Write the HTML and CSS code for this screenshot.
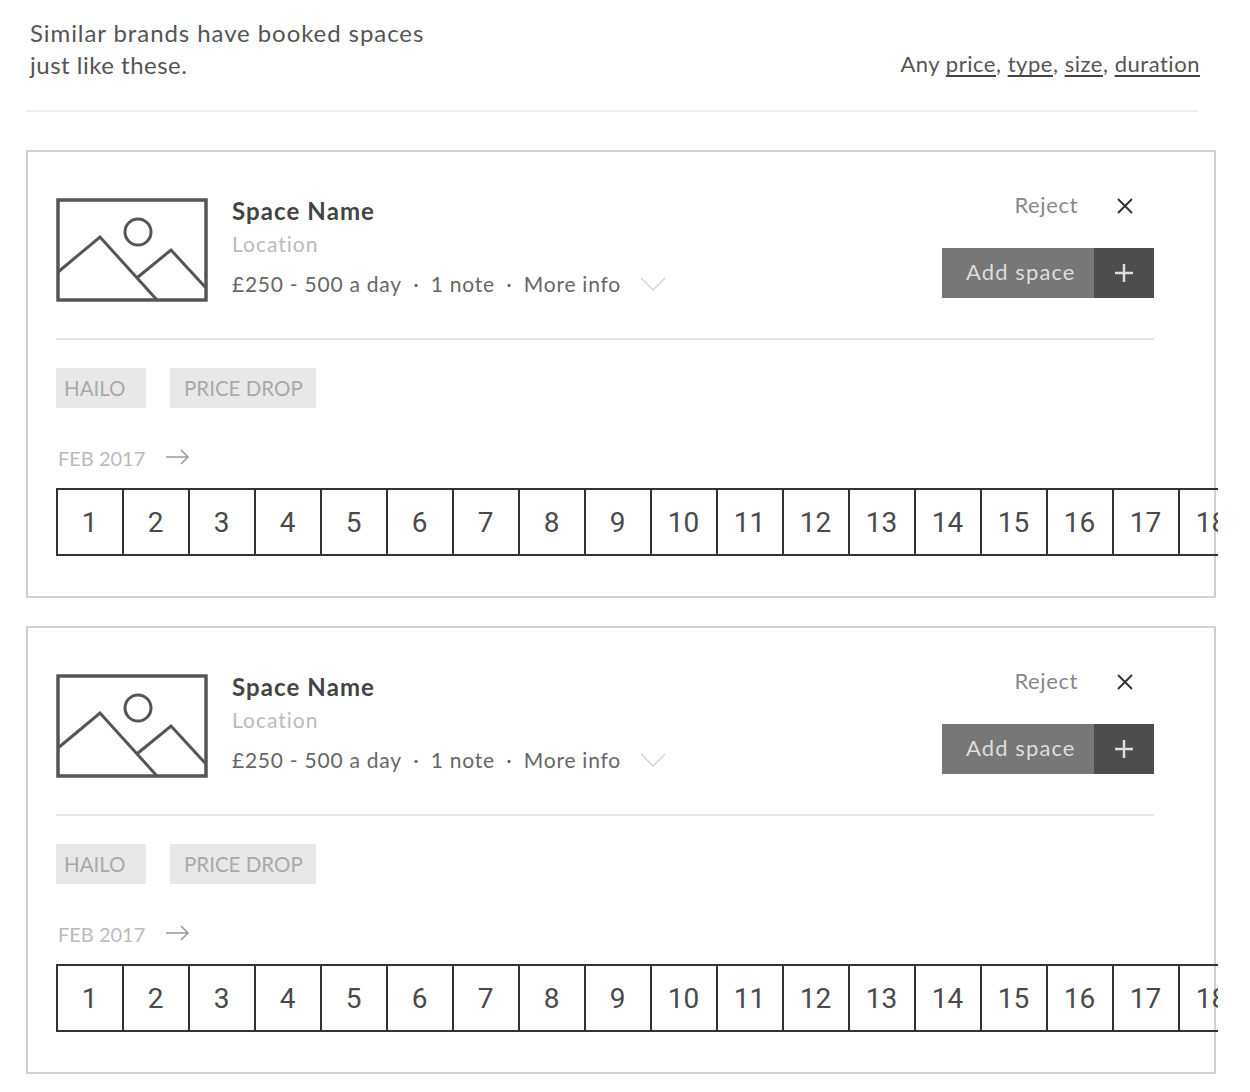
FILE: index.html
```html
<!DOCTYPE html>
<html>
<head>
<meta name="viewport" content="width=device-width, initial-scale=1">
<link rel="stylesheet" href="styles.css">
</head>
<body>

<div class="intro">
    <h2 class="introTitle">Similar brands have booked spaces<br><span class="introEnd">just like these.</span></h2>
    <p class="filters">Any <a href="#price">price</a>, <a href="#type">type</a>, <a href="#size">size</a>, <a href="#duration">duration</a></p>
</div>

<div class="card">
    <div class="cardHead">
        <svg class="thumb" viewBox="0 0 152 104">
            <rect x="2" y="2" width="148" height="100" fill="none" stroke="#555" stroke-width="3.5"/>
            <circle cx="82" cy="34" r="13" fill="none" stroke="#555" stroke-width="3"/>
            <path d="M2 74 L44 39 L101 102 M82 79 L115 52 L150 90" fill="none" stroke="#555" stroke-width="3"/>
        </svg>
        <div class="info">
            <div class="name">Space Name</div>
            <div class="location">Location</div>
            <div class="meta">
                <span>£250 - 500 a day</span><span class="dot">·</span><span>1 note</span><span class="dot">·</span><span>More info</span>
                <svg class="chevron" width="26" height="14" viewBox="0 0 26 14"><path d="M1 1 L13 13 L25 1" fill="none" stroke="#d4d4d4" stroke-width="1.5"/></svg>
            </div>
        </div>
        <div class="actions">
            <div class="reject">
                <span class="rejectLabel">Reject</span>
                <svg width="18" height="18" viewBox="0 0 18 18"><path d="M2 2 L16 16 M16 2 L2 16" fill="none" stroke="#333" stroke-width="2"/></svg>
            </div>
            <div class="addBtn">
                <span class="addLabel">Add space</span>
                <span class="addIcon"><svg width="20" height="20" viewBox="0 0 20 20"><path d="M10 1 V19 M1 10 H19" fill="none" stroke="#ddd" stroke-width="2.5"/></svg></span>
            </div>
        </div>
    </div>
    <div class="tags">
        <span class="tag">HAILO</span>
        <span class="tag tagWide">PRICE DROP</span>
    </div>
    <div class="month">
        <span class="monthLabel">FEB 2017</span>
        <svg width="24" height="16" viewBox="0 0 24 16"><path d="M1 8 H23 M16 1 L23 8 L16 15" fill="none" stroke="#999" stroke-width="1.5"/></svg>
    </div>
    <div class="days">
        <div class="day">1</div><div class="day">2</div><div class="day">3</div><div class="day">4</div><div class="day">5</div><div class="day">6</div><div class="day">7</div><div class="day">8</div><div class="day">9</div><div class="day">10</div><div class="day">11</div><div class="day">12</div><div class="day">13</div><div class="day">14</div><div class="day">15</div><div class="day">16</div><div class="day">17</div><div class="day">18</div>
    </div>
</div>

<div class="card">
    <div class="cardHead">
        <svg class="thumb" viewBox="0 0 152 104">
            <rect x="2" y="2" width="148" height="100" fill="none" stroke="#555" stroke-width="3.5"/>
            <circle cx="82" cy="34" r="13" fill="none" stroke="#555" stroke-width="3"/>
            <path d="M2 74 L44 39 L101 102 M82 79 L115 52 L150 90" fill="none" stroke="#555" stroke-width="3"/>
        </svg>
        <div class="info">
            <div class="name">Space Name</div>
            <div class="location">Location</div>
            <div class="meta">
                <span>£250 - 500 a day</span><span class="dot">·</span><span>1 note</span><span class="dot">·</span><span>More info</span>
                <svg class="chevron" width="26" height="14" viewBox="0 0 26 14"><path d="M1 1 L13 13 L25 1" fill="none" stroke="#d4d4d4" stroke-width="1.5"/></svg>
            </div>
        </div>
        <div class="actions">
            <div class="reject">
                <span class="rejectLabel">Reject</span>
                <svg width="18" height="18" viewBox="0 0 18 18"><path d="M2 2 L16 16 M16 2 L2 16" fill="none" stroke="#333" stroke-width="2"/></svg>
            </div>
            <div class="addBtn">
                <span class="addLabel">Add space</span>
                <span class="addIcon"><svg width="20" height="20" viewBox="0 0 20 20"><path d="M10 1 V19 M1 10 H19" fill="none" stroke="#ddd" stroke-width="2.5"/></svg></span>
            </div>
        </div>
    </div>
    <div class="tags">
        <span class="tag">HAILO</span>
        <span class="tag tagWide">PRICE DROP</span>
    </div>
    <div class="month">
        <span class="monthLabel">FEB 2017</span>
        <svg width="24" height="16" viewBox="0 0 24 16"><path d="M1 8 H23 M16 1 L23 8 L16 15" fill="none" stroke="#999" stroke-width="1.5"/></svg>
    </div>
    <div class="days">
        <div class="day">1</div><div class="day">2</div><div class="day">3</div><div class="day">4</div><div class="day">5</div><div class="day">6</div><div class="day">7</div><div class="day">8</div><div class="day">9</div><div class="day">10</div><div class="day">11</div><div class="day">12</div><div class="day">13</div><div class="day">14</div><div class="day">15</div><div class="day">16</div><div class="day">17</div><div class="day">18</div>
    </div>
</div>

</body>
</html>
```

FILE: styles.css
```css
* {
    box-sizing: border-box;
}

body {
    margin: 0;
    padding: 0 0 0 26px;
    font-family: Lato, "Liberation Sans", sans-serif;
    color: #555;
    background: #fff;
}

/* Top text and filters */
.intro {
    width: 1172px;
    height: 112px;
    padding: 17px 0 0 4px;
    display: flex;
    justify-content: space-between;
    border-bottom: 2px solid #eee;
}

.introTitle {
    margin: 0;
    font-size: 24px;
    line-height: 32px;
    font-weight: 400;
    letter-spacing: 0.92px;
}

.introEnd {
    letter-spacing: 0.5px;
}

.filters {
    margin: 31px -2px 0 0;
    font-size: 22px;
    line-height: 32px;
    letter-spacing: 0.53px;
}

.filters a {
    color: #555;
    text-decoration: underline;
    text-decoration-color: #444;
    text-decoration-thickness: 2px;
    text-underline-offset: 3px;
    text-decoration-skip-ink: none;
}

/* Cards */
.card {
    width: 1190px;
    height: 448px;
    margin-bottom: 28px;
    padding: 46px 0 0 28px;
    border: 2px solid #d0d0d0;
}

.intro + .card {
    margin-top: 38px;
}

.cardHead {
    width: 1098px;
    height: 142px;
    display: flex;
    border-bottom: 2px solid #e6e6e6;
}

.thumb {
    width: 152px;
    height: 104px;
    flex: none;
}

.info {
    flex: 1;
    padding: 0 0 0 24px;
}

.name {
    font-size: 24px;
    line-height: 26px;
    font-weight: 700;
    color: #444;
    letter-spacing: 1.1px;
}

.location {
    margin-top: 6px;
    font-size: 21px;
    line-height: 28px;
    color: #bbb;
    letter-spacing: 1px;
}

.meta {
    margin-top: 12px;
    display: flex;
    align-items: center;
    font-size: 21px;
    line-height: 28px;
    color: #666;
    letter-spacing: 0.75px;
}

.dot {
    width: 29px;
    text-align: center;
}

.chevron {
    margin-left: 19px;
}

.actions {
    width: 212px;
    flex: none;
}

.reject {
    display: flex;
    justify-content: flex-end;
    align-items: center;
    gap: 38px;
    height: 16px;
    padding-right: 20px;
    font-size: 22px;
    color: #888;
    letter-spacing: 0.6px;
}

.rejectLabel {
    padding-bottom: 4px;
}

.addBtn {
    margin-top: 34px;
    display: flex;
    height: 50px;
    background: #777;
}

.addLabel {
    flex: 1;
    padding-left: 24px;
    font-size: 22px;
    line-height: 48px;
    color: #ddd;
    letter-spacing: 1.1px;
}

.addIcon {
    width: 60px;
    display: flex;
    align-items: center;
    justify-content: center;
    background: #4d4d4d;
}

/* Tags */
.tags {
    margin-top: 28px;
    display: flex;
    gap: 24px;
}

.tag {
    width: 90px;
    height: 40px;
    padding-left: 8px;
    background: #e8e8e8;
    color: #aaa;
    font-size: 20.5px;
    line-height: 40px;
}

.tagWide {
    width: 146px;
    padding-left: 14px;
}

/* Calendar strip */
.month {
    margin: 39px 0 0 2px;
    height: 20px;
    display: flex;
    align-items: center;
    gap: 20px;
    font-size: 20px;
    color: #bbb;
}

.monthLabel {
    padding-top: 2px;
}

.days {
    width: 1162px;
    height: 68px;
    margin-top: 21px;
    display: flex;
    overflow: hidden;
    border-top: 2px solid #333;
    border-bottom: 2px solid #333;
    border-left: 2px solid #333;
}

.day {
    width: 66px;
    flex: none;
    display: flex;
    align-items: center;
    justify-content: center;
    padding-right: 1px;
    border-right: 2px solid #333;
    font-family: Roboto, sans-serif;
    font-size: 28px;
    color: #4a4a4a;
}
```
